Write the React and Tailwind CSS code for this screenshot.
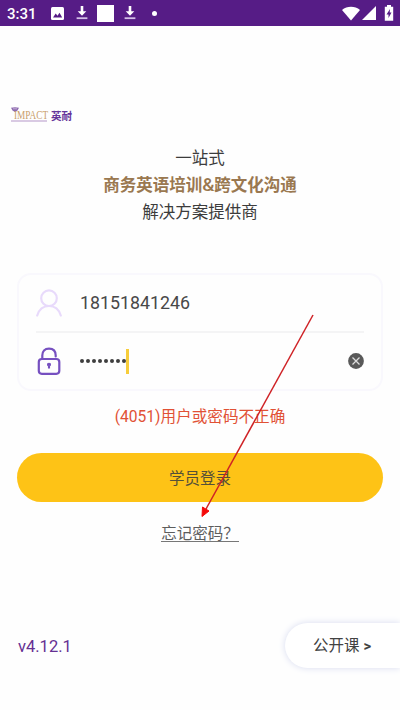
const DownloadIcon = () => (
  <svg className="h-4 w-3" viewBox="0 0 12 16">
    <path d="M4.700 1h2.600v5.200h3L6 10.800 1.700 6.200h3z" fill="#fff" />
    <path d="M.6 13.200h10.800" stroke="#d3bfe6" strokeWidth="1.800" />
  </svg>
);

const StatusBar = () => (
  <header className="flex h-[26px] items-center bg-[#561c86] pl-[7px] text-white">
    <span className="w-[44px] pt-[1px] text-[15px] font-medium leading-6">3:31</span>
    <svg className="mr-[12px] h-[13px] w-[13px]" viewBox="0 0 13 13">
      <rect width="13" height="13" rx="1.5" fill="#fff" />
      <path d="M2 10.500l2.700-4 1.800 2.300 2-3 2.700 4.700z" fill="#561c86" />
    </svg>
    <DownloadIcon />
    <span className="ml-[9px] mr-[10px] h-[17px] w-[17px] bg-white" />
    <DownloadIcon />
    <span className="ml-[16px] h-[5px] w-[5px] rounded-full bg-white" />
    <div className="ml-auto flex items-center pr-[6px]">
      <svg className="h-[15px] w-[18px]" viewBox="0 0 18 15">
        <path d="M0 4C5-.2 13-.2 18 4L9 14.500z" fill="#fff" />
      </svg>
      <svg className="ml-[2px] h-[14px] w-[14px]" viewBox="0 0 14 14">
        <path d="M14 0v14H0z" fill="#fff" />
      </svg>
      <svg className="ml-[8px] h-[16px] w-[10px]" viewBox="0 0 10 16">
        <path d="M3 0h4v1.800h2.200v14H.8v-14H3z" fill="#fff" />
        <path d="M6 4L2.500 9.500h2V13l3-5.400H5.700z" fill="#561c86" />
      </svg>
    </div>
  </header>
);

const Logo = () => (
  <div className="flex h-[17px] items-end pl-[11px]">
    <div className="relative w-[40px]">
      <svg className="absolute left-0 top-[-2px] h-[5px] w-[8px]" viewBox="0 0 8 5">
        <path d="M0 .8Q4-.5 8 .8L6.500 3.500 4 5 1.500 3.500z" fill="#8d6bb0" />
        <path d="M2 1.800h4" stroke="#d8c6e4" strokeWidth=".7" />
      </svg>
      <div className="ml-[3px] w-max origin-left scale-x-[.74] font-['Liberation_Serif',serif] text-[12.5px] font-medium leading-[12px] text-[#c99f6c]">
        IMPACT
      </div>
      <div className="mt-[-1px] h-[2px] w-[36px] bg-[#d9cae3]" />
    </div>
    <span className="font-['Noto_Sans_CJK_SC',sans-serif] text-[10.5px] font-bold leading-[12px] text-[#65349a]">英耐</span>
  </div>
);

const UserIcon = () => (
  <svg className="h-[28px] w-[26px]" viewBox="0 0 26 28" fill="none" stroke="#e8dafb" strokeWidth="2.200" strokeLinecap="round">
    <circle cx="13" cy="9.200" r="7.800" />
    <path d="M1.200 26.500C3 20.500 7.500 17 13 17s10 3.500 11.800 9.500" />
  </svg>
);

const LockIcon = () => (
  <svg className="h-[28px] w-[26px]" viewBox="0 0 26 28" fill="none" stroke="#7650c0" strokeWidth="2.200" strokeLinecap="round">
    <rect x="2.800" y="12" width="20.500" height="14.800" rx="3" />
    <path d="M6.300 12V8.500C6.300 4.100 8.700 1.600 13 1.600s6.700 2.500 6.700 6.900v1" />
    <path d="M11.600 16.800q1.400-1.200 2.800 0 .4 1.500-.9 2.300V21h-1v-1.900q-1.300-.8-.9-2.300z" fill="#7650c0" strokeWidth="1.100" />
  </svg>
);

const ClearIcon = () => (
  <svg className="h-[16px] w-[16px]" viewBox="0 0 16 16">
    <circle cx="8" cy="8" r="7.900" fill="#595959" />
    <path d="M4.500 4.500l7 7m0-7l-7 7" stroke="#ddd" strokeWidth="1.300" />
  </svg>
);

const LoginForm = () => (
  <div className="mx-[17px] mt-[47px] h-[118px] rounded-[14px] border-2 border-[#f9f8fd] px-[17px]">
    <div className="flex h-[58px] items-center border-b-2 border-[#f4f4f5]">
      <UserIcon />
      <span className="ml-[18px] text-[17.8px] leading-6 text-[#484848]">18151841246</span>
    </div>
    <div className="flex h-[56px] items-center">
      <LockIcon />
      <div className="ml-[18px] flex gap-[2px]">
        {Array.from({ length: 8 }, (_, i) => (
          <span key={i} className="h-[4px] w-[4px] rounded-full bg-[#3e3e3e]" />
        ))}
      </div>
      <span className="h-[25px] w-[3px] bg-[#f7cd3b]" />
      <div className="ml-auto">
        <ClearIcon />
      </div>
    </div>
  </div>
);

// 指向“忘记密码”的标注箭头
const Arrow = () => (
  <svg className="pointer-events-none absolute left-[195px] top-[310px] h-[215px] w-[125px]" viewBox="0 0 125 215">
    <path d="M118 5L11 199" stroke="#cf2226" strokeWidth="1.500" />
    <path d="M7 206.500L7.500 197 14 201z" fill="#f40a0a" stroke="#f40a0a" />
  </svg>
);

export default function App() {
  return (
    <div className="relative flex h-[710px] w-[400px] flex-col overflow-hidden bg-[#fefefe] font-[Roboto,'Noto_Sans_CJK_SC',sans-serif]">
      <StatusBar />
      <main className="flex flex-col pt-[79px]">
        <Logo />
        <div className="mt-[23px] text-center text-[16.5px] leading-[27px] text-[#3c3c3c]">
          <p>一站式</p>
          <p className="font-bold text-[#9a7850]">
            商务英语培训<span className="text-[19px] font-medium leading-none">&amp;</span>跨文化沟通
          </p>
          <p>解决方案提供商</p>
        </div>
        <LoginForm />
        <p className="mt-[14px] text-center text-[15.600px] leading-6 text-[#e15135]">(4051)用户或密码不正确</p>
        <button className="mx-[17px] mt-[24px] h-[49px] rounded-full bg-[#fec316] pt-[4px] text-[15.500px] text-[#555039]">学员登录</button>
        <a className="mt-[21px] h-[19px] self-center border-b border-[#777] text-[15.500px] leading-[23px] text-[#5d5d5d]">忘记密码？</a>
      </main>
      <footer className="mb-[42px] mt-auto flex items-center justify-between pl-[18px]">
        <span className="pt-[2px] text-[16.500px] leading-6 text-[#653092]">v4.12.1</span>
        <button className="flex h-[45px] w-[115px] items-center rounded-l-full bg-white pl-[28px] pt-[2px] text-[15.500px] text-[#424242] shadow-[0_0_7px_#d8dcf0]">
          公开课<span className="ml-[4px] text-[15px] font-bold">&gt;</span>
        </button>
      </footer>
      <Arrow />
    </div>
  );
}
